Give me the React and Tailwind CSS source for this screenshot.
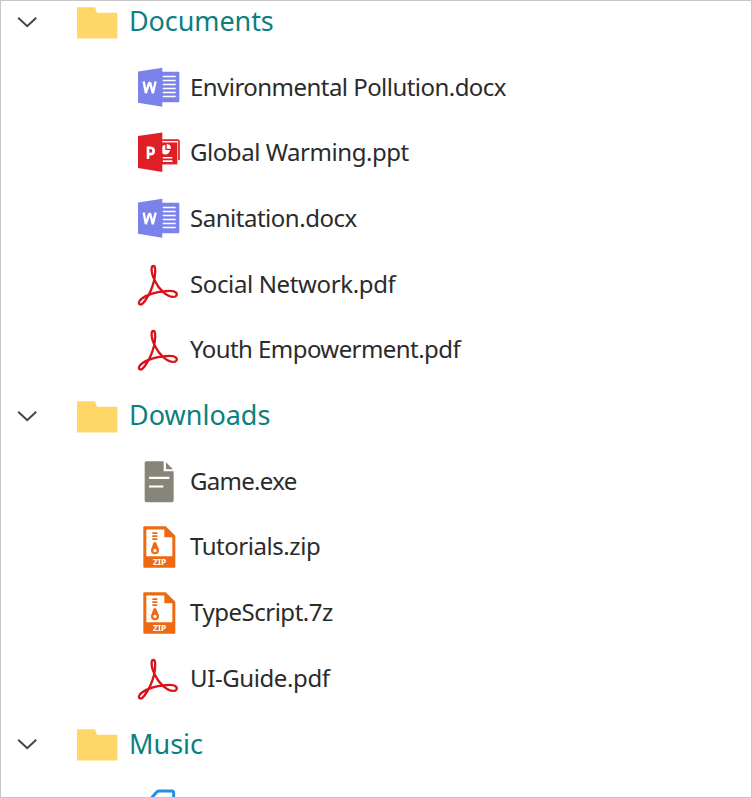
const ICON = 'block h-11 w-11 shrink-0';

function Chevron() {
  return (
    <svg className="block h-6 w-6 shrink-0" viewBox="0 0 24 24" fill="none" stroke="#444" strokeWidth="2">
      <path d="M3.200 7.800 12.200 16.200 21.200 7.800" />
    </svg>
  );
}

function FolderIcon() {
  return (
    <svg className={ICON} viewBox="228 -1.5 132 132">
      <path d="M231 20h54l6 17h61v77H231z" fill="#ffd668" />
    </svg>
  );
}

function WordIcon() {
  return (
    <svg className={ICON} viewBox="21 16.600 132 132">
      <path d="M94 34h51q3 0 3 3v85q0 3-3 3H94z" fill="#7b83eb" />
      <path d="M98 48h39M98 60h39M98 72h39M98 84h39M98 96h39M98 108h39" stroke="#fff" strokeWidth="4.5" />
      <path d="M24 33 97 22v117L24 127z" fill="#7b83eb" />
      <path d="M41 63l6.500 35 10-31h3l8 31L77 63" fill="none" stroke="#fff" strokeWidth="7" strokeLinejoin="bevel" />
    </svg>
  );
}

function PptIcon() {
  return (
    <svg className={ICON} viewBox="21 17.7 132 132">
      <path d="M97 45h46q4 0 4 4v56" fill="none" stroke="#e01e25" strokeWidth="5" />
      <path d="M96 52h46v66H96z" fill="#e01e25" />
      <path d="M106 60a14 14 0 1 0 14 15h-14z" fill="#fff" />
      <path d="M110 57a14 14 0 0 1 13 14h-13z" fill="#fff" />
      <path d="M98 98h29M98 108h29" stroke="#fff" strokeWidth="5" />
      <path d="M24 33 97 22v119L24 129z" fill="#e01e25" />
      <path d="M54 102V68h7q10 0 10 9.500T61 87h-7" fill="none" stroke="#fff" strokeWidth="8" />
    </svg>
  );
}

function PdfIcon() {
  return (
    <svg className={ICON} viewBox="21 22.2 132 132" fill="none" stroke="#d8141b" strokeWidth="7" strokeLinejoin="round">
      <path d="M75 76C67 61 64 48 65 38c1-9 9-9 10 0 1 10 0 25-3 38-5 20-17 46-28 61-5 7-11 11-15 9-5-3-1-12 8-18 15-10 44-19 66-21 16-2 30-1 35 4 5 6 1 13-9 13-18 0-42-22-54-48z" />
    </svg>
  );
}

function FileIcon() {
  return (
    <svg className={ICON} viewBox="21 29.500 132 132">
      <path d="M49 33h52v30h30v88q0 5-5 5H49q-5 0-5-5V38q0-5 5-5z" fill="#87847a" />
      <path d="M108 36l21 21h-21z" fill="#87847a" />
      <path d="M57 83h61M57 109h43" stroke="#fff" strokeWidth="6.500" />
    </svg>
  );
}

function ZipIcon() {
  return (
    <svg className={ICON} viewBox="21 23.600 132 132">
      <path d="M43 27h64l29 29v95q0 1-1 1H43q-3 0-3-3V30q0-3 3-3z" fill="#ee6a12" />
      <path d="M49 37h54v23h24v57H49z" fill="#fff" />
      <path d="M67 48h15M67 57h15M67 66h15" stroke="#ee6a12" strokeWidth="5" />
      <path d="M71 75h7l9 22q1 14-12 14T63 97z" fill="#ee6a12" />
      <circle cx="75" cy="100" r="5" fill="#fff" />
      <text x="88.500" y="144" textAnchor="middle" fontSize="25" fontWeight="700" fill="#fff" fontFamily="'Noto Sans', sans-serif">ZIP</text>
    </svg>
  );
}

function MusicIcon() {
  return (
    <svg className={ICON} viewBox="51 203.7 132 132" fill="none" stroke="#1e90e8" strokeWidth="9">
      <path d="M94 234l15-17q3-4 8-4h39q5 0 5 6v110H94z" />
    </svg>
  );
}

const rows = [
  { folder: true, name: 'Documents', tracking: 'tracking-[-0.1px]' },
  { icon: WordIcon, name: 'Environmental Pollution.docx', tracking: 'tracking-[-0.54px]' },
  { icon: PptIcon, name: 'Global Warming.ppt', tracking: 'tracking-[-0.45px]' },
  { icon: WordIcon, name: 'Sanitation.docx', tracking: 'tracking-[-0.48px]' },
  { icon: PdfIcon, name: 'Social Network.pdf', tracking: 'tracking-[-0.37px]' },
  { icon: PdfIcon, name: 'Youth Empowerment.pdf', tracking: 'tracking-[-0.57px]' },
  { folder: true, name: 'Downloads', tracking: 'tracking-normal' },
  { icon: FileIcon, name: 'Game.exe', tracking: 'tracking-[-0.7px]' },
  { icon: ZipIcon, name: 'Tutorials.zip', tracking: 'tracking-[-0.45px]' },
  { icon: ZipIcon, name: 'TypeScript.7z', tracking: 'tracking-[-0.48px]' },
  { icon: PdfIcon, name: 'UI-Guide.pdf', tracking: 'tracking-[-0.4px]' },
  { folder: true, name: 'Music', tracking: 'tracking-normal' },
  { icon: MusicIcon, name: '', tracking: 'tracking-normal' },
];

function Row({ row }) {
  if (row.folder) {
    return (
      <li className="flex h-[65.7px] items-center pl-3.5">
        <Chevron />
        <div className="ml-[37px] flex items-center gap-[9px]">
          <FolderIcon />
          <span className={`pb-0.5 text-[27px] leading-none whitespace-nowrap text-[#0c8080] ${row.tracking}`}>{row.name}</span>
        </div>
      </li>
    );
  }
  const Icon = row.icon;
  return (
    <li className="flex h-[65.7px] items-center gap-[9px] pl-[136px]">
      <Icon />
      <span className={`pb-0.5 text-[24px] leading-none whitespace-nowrap text-[#2b2b2b] ${row.tracking}`}>{row.name}</span>
    </li>
  );
}

export default function App() {
  return (
    <div className="h-[798px] w-[752px] overflow-hidden border border-[#c6c6c6] bg-white font-['Noto_Sans',sans-serif]">
      <ul className="-mt-3">
        {rows.map((row, i) => (
          <Row key={i} row={row} />
        ))}
      </ul>
    </div>
  );
}
